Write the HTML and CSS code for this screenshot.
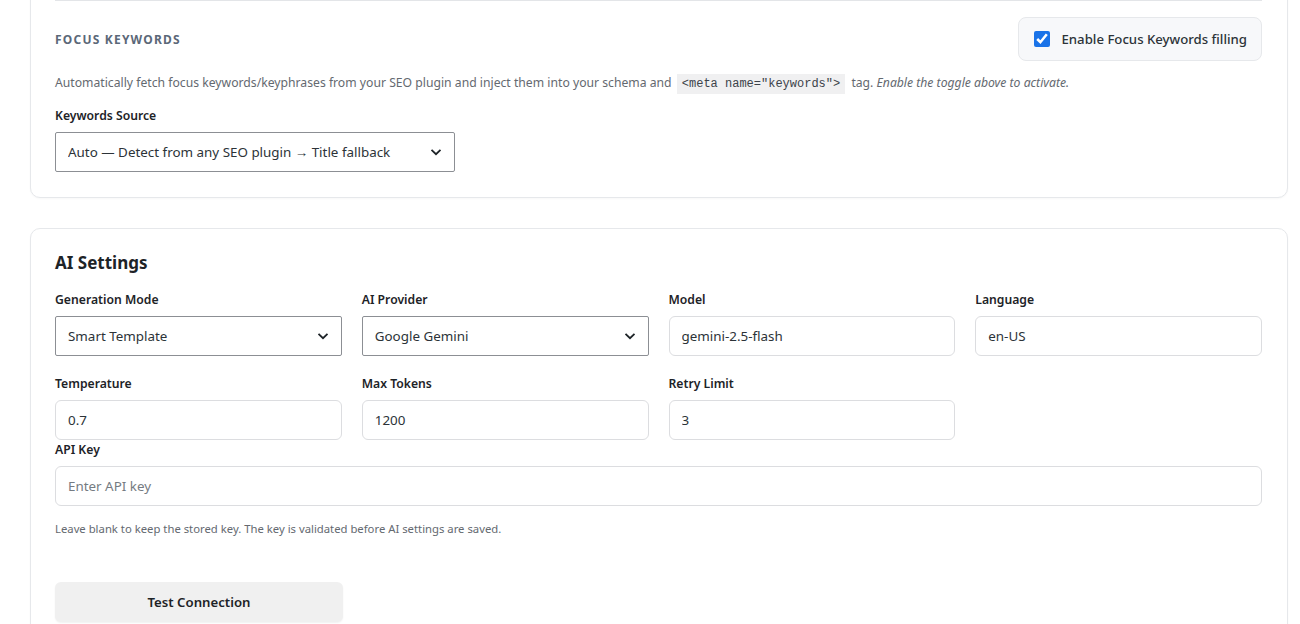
FILE: index.html
```html
<!DOCTYPE html>
<html lang="en">
<head>
<meta charset="utf-8">
<title>Settings</title>
<link rel="stylesheet" href="styles.css">
</head>
<body>
<div class="wrap">
  <section class="card card-first">
    <div class="divider"></div>
    <div class="section-head">
      <h3 class="section-title">Focus Keywords</h3>
      <label class="toggle-box">
        <input type="checkbox" class="check" checked>
        <span>Enable Focus Keywords filling</span>
      </label>
    </div>
    <p class="desc">Automatically fetch focus keywords/keyphrases from your SEO plugin and inject them into your schema and <code>&lt;meta name="keywords"&gt;</code> tag. <em>Enable the toggle above to activate.</em></p>
    <label class="field-label source-label">Keywords Source</label>
    <select class="select select-wide">
      <option>Auto — Detect from any SEO plugin → Title fallback</option>
    </select>
  </section>

  <section class="card card-ai">
    <h2 class="card-title">AI Settings</h2>
    <div class="grid">
      <div class="field">
        <label class="field-label">Generation Mode</label>
        <select class="select"><option>Smart Template</option></select>
      </div>
      <div class="field">
        <label class="field-label">AI Provider</label>
        <select class="select"><option>Google Gemini</option></select>
      </div>
      <div class="field">
        <label class="field-label">Model</label>
        <input class="input" type="text" value="gemini-2.5-flash">
      </div>
      <div class="field">
        <label class="field-label">Language</label>
        <input class="input" type="text" value="en-US">
      </div>
      <div class="field">
        <label class="field-label">Temperature</label>
        <input class="input" type="text" value="0.7">
      </div>
      <div class="field">
        <label class="field-label">Max Tokens</label>
        <input class="input" type="text" value="1200">
      </div>
      <div class="field">
        <label class="field-label">Retry Limit</label>
        <input class="input" type="text" value="3">
      </div>
    </div>
    <div class="field api">
      <label class="field-label">API Key</label>
      <input class="input" type="password" placeholder="Enter API key">
      <p class="help">Leave blank to keep the stored key. The key is validated before AI settings are saved.</p>
    </div>
    <button class="btn" type="button">Test Connection</button>
  </section>
</div>
</body>
</html>
```

FILE: styles.css
```css
* { box-sizing: border-box; }
html, body { margin: 0; padding: 0; background: #ffffff; }
body {
  font-family: "Noto Sans", "Open Sans", sans-serif;
  color: #1d2327;
  overflow: hidden;
}
.wrap {
  padding: 0 12px 0 30px;
  display: flex;
  flex-direction: column;
  gap: 30px;
}
.card {
  background: #fff;
  border: 1px solid #e6e8eb;
  border-radius: 10px;
  padding: 0 25px 24px 24px;
  box-shadow: 0 1px 2px rgba(0,0,0,0.03);
}
.card-first {
  margin-top: -12px;
  padding-top: 11px;
  padding-bottom: 25px;
}
.divider { height: 1px; background: #e3e5e8; }
.section-head {
  margin-top: 16px;
  display: flex;
  justify-content: space-between;
  align-items: center;
}
.section-title {
  margin: 0;
  font-size: 12px;
  font-weight: 700;
  letter-spacing: 1.2px;
  text-transform: uppercase;
  color: #5b6878;
}
.toggle-box {
  display: flex;
  align-items: center;
  gap: 11px;
  height: 44px;
  padding: 0 14px 0 15px;
  background: #f7f8fa;
  border: 1px solid #e6e8eb;
  border-radius: 8px;
  font-size: 13.2px;
  font-weight: 500;
  color: #2c3338;
}
.check {
  width: 16px; height: 16px; margin: 0;
  accent-color: #1a73e8;
}
.desc {
  margin: 12px 0 0;
  font-size: 12.2px;
  line-height: 20px;
  height: 20px;
  color: #646970;
}
.desc code {
  font-family: "Liberation Mono", "DejaVu Sans Mono", monospace;
  font-size: 12px;
  line-height: 1;
  background: #f0f0f1;
  padding: 3px 5px;
  margin: 0 3px 0 2px;
  color: #3c434a;
}
.desc em { font-style: italic; }
.field-label {
  display: block;
  font-size: 12.2px;
  font-weight: 600;
  line-height: 20px;
  color: #1d2327;
  margin-top: 14px;
  margin-bottom: 6px;
}
.source-label { margin-top: 13px; }
.select, .input {
  display: block;
  width: 100%;
  height: 40px;
  font-family: inherit;
  font-size: 13.4px;
  color: #2c3338;
  padding: 0 12px;
  background-color: #fff;
}
.select {
  appearance: none;
  -webkit-appearance: none;
  border: 1px solid #8c8f94;
  border-radius: 2px;
  background-image: url("data:image/svg+xml;utf8,<svg xmlns='http://www.w3.org/2000/svg' width='12' height='8' viewBox='0 0 12 8'><path d='M1.5 1.8 L6 6.2 L10.5 1.8' fill='none' stroke='%231d2327' stroke-width='1.8'/></svg>");
  background-repeat: no-repeat;
  background-position: right 12px center;
  background-size: 12px 8px;
}
.select-wide { width: 400px; }
.input {
  border: 1px solid #dcdde0;
  border-radius: 6px;
}
.input::placeholder { color: #757b82; }
.card-ai { padding-top: 21px; }
.card-title {
  margin: 0;
  font-size: 17px;
  font-weight: 700;
  line-height: 26px;
  color: #1d2327;
}
.grid {
  display: grid;
  grid-template-columns: repeat(4, 1fr);
  column-gap: 20px;
  row-gap: 0;
}
.grid .field-label { margin-top: 14px; }
.grid .field:nth-child(n+5) .field-label { margin-top: 18px; }
.api .field-label { margin-top: 0; }
.help {
  margin: 14px 0 0;
  font-size: 11.3px;
  line-height: 18px;
  color: #646970;
}
.btn {
  display: block;
  margin-top: 44px;
  width: 288px;
  height: 40px;
  border: 0;
  border-radius: 6px;
  background: #f0f0f0;
  font-family: inherit;
  font-size: 13.2px;
  font-weight: 600;
  color: #1d2327;
  box-shadow: 0 1px 2px rgba(0,0,0,0.06);
}
```
